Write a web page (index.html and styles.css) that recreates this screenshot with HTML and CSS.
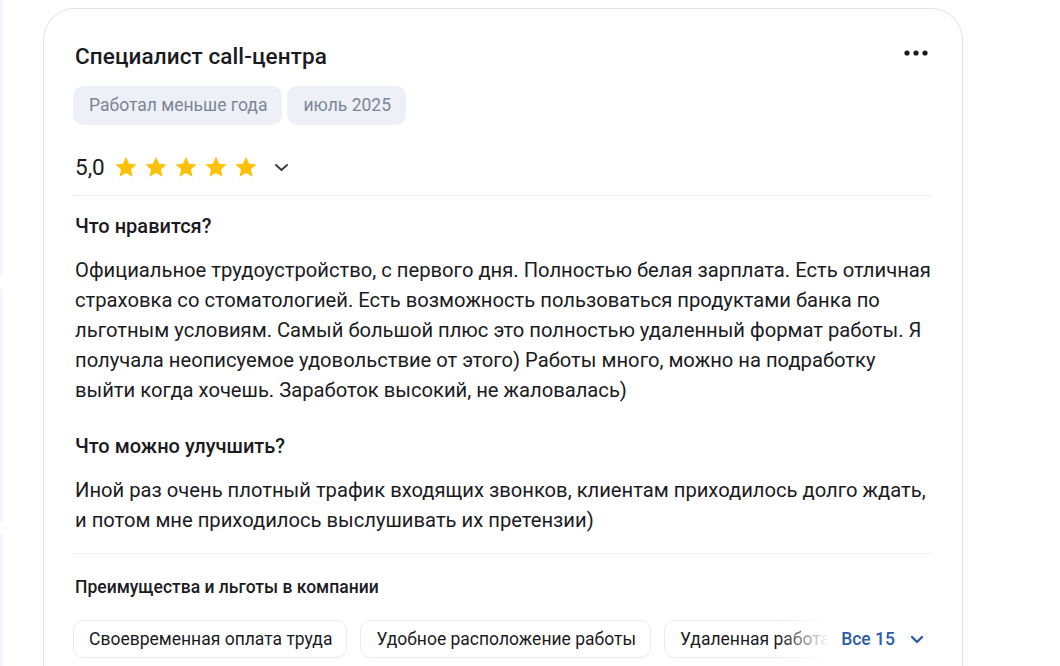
FILE: index.html
```html
<!DOCTYPE html>
<html lang="ru">
<head>
    <meta charset="UTF-8">
    <meta name="viewport" content="width=device-width, initial-scale=1.0">
    <title>Отзыв сотрудника</title>
    <link rel="stylesheet" href="styles.css">
</head>
<body>
    <div class="page">
        <div class="side-list">
            <div class="side-card side-card-1"></div>
            <div class="side-card side-card-2"></div>
            <div class="side-card side-card-3"></div>
        </div>

        <article class="review">
            <div class="review-head">
                <h1 class="review-title">Специалист call-центра</h1>
                <button class="more-btn" aria-label="Ещё">
                    <svg width="26" height="8" viewBox="0 0 26 8">
                        <circle cx="4" cy="4" r="2.6" fill="#1b1b1f"/>
                        <circle cx="13" cy="4" r="2.6" fill="#1b1b1f"/>
                        <circle cx="22" cy="4" r="2.6" fill="#1b1b1f"/>
                    </svg>
                </button>
            </div>

            <div class="tags">
                <span class="tag">Работал меньше года</span>
                <span class="tag">июль 2025</span>
            </div>

            <div class="rating">
                <span class="rating-value">5,0</span>
                <span class="stars">
                    <svg class="star" viewBox="0 0 24 24"><path d="M12 1.8l3.1 6.9 7.4.7-5.6 5 1.7 7.4L12 17.9l-6.6 3.9 1.7-7.4-5.6-5 7.4-.7z"/></svg>
                    <svg class="star" viewBox="0 0 24 24"><path d="M12 1.8l3.1 6.9 7.4.7-5.6 5 1.7 7.4L12 17.9l-6.6 3.9 1.7-7.4-5.6-5 7.4-.7z"/></svg>
                    <svg class="star" viewBox="0 0 24 24"><path d="M12 1.8l3.1 6.9 7.4.7-5.6 5 1.7 7.4L12 17.9l-6.6 3.9 1.7-7.4-5.6-5 7.4-.7z"/></svg>
                    <svg class="star" viewBox="0 0 24 24"><path d="M12 1.8l3.1 6.9 7.4.7-5.6 5 1.7 7.4L12 17.9l-6.6 3.9 1.7-7.4-5.6-5 7.4-.7z"/></svg>
                    <svg class="star" viewBox="0 0 24 24"><path d="M12 1.8l3.1 6.9 7.4.7-5.6 5 1.7 7.4L12 17.9l-6.6 3.9 1.7-7.4-5.6-5 7.4-.7z"/></svg>
                </span>
                <svg class="chevron" width="15" height="9" viewBox="0 0 15 9"><path d="M2 2l5.5 5 5.5-5" fill="none" stroke="#3c3c43" stroke-width="2" stroke-linecap="round" stroke-linejoin="round"/></svg>
            </div>

            <hr class="divider">

            <section class="block">
                <h3 class="block-title">Что нравится?</h3>
                <p class="block-text">Официальное трудоустройство, с первого дня. Полностью белая зарплата. Есть отличная страховка со стоматологией. Есть возможность пользоваться продуктами банка по льготным условиям. Самый большой плюс это полностью удаленный формат работы. Я получала неописуемое удовольствие от этого) Работы много, можно на подработку выйти когда хочешь. Заработок высокий, не жаловалась)</p>
            </section>

            <section class="block block-second">
                <h3 class="block-title">Что можно улучшить?</h3>
                <p class="block-text">Иной раз очень плотный трафик входящих звонков, клиентам приходилось долго ждать, и потом мне приходилось выслушивать их претензии)</p>
            </section>

            <hr class="divider divider-bottom">

            <h4 class="benefits-title">Преимущества и льготы в компании</h4>
            <div class="benefits">
                <div class="benefit-list">
                    <span class="benefit">Своевременная оплата труда</span>
                    <span class="benefit">Удобное расположение работы</span>
                    <span class="benefit">Удаленная работа</span>
                    <span class="benefit">ДМС</span>
                </div>
                <button class="show-all">
                    Все 15
                    <svg width="14" height="9" viewBox="0 0 14 9"><path d="M2 2l5 5 5-5" fill="none" stroke="#2d5ca8" stroke-width="2.4" stroke-linecap="round" stroke-linejoin="round"/></svg>
                </button>
            </div>
        </article>
    </div>
</body>
</html>
```

FILE: styles.css
```css
body { margin: 0; font-family: Roboto, "Noto Sans", Arial, sans-serif; color: #1b1b1f; background: #fff; overflow: hidden; }

.page { display: flex; align-items: flex-start; height: 666px; }

/* кусочки соседних карточек слева */
.side-list { width: 3px; display: flex; flex-direction: column; gap: 12px; flex-shrink: 0; margin-top: -20px; }
.side-card { background: #f4f5fb; border-radius: 0 10px 10px 0; }
.side-card-1 { height: 296px; }
.side-card-2 { height: 234px; }
.side-card-3 { height: 200px; }

.review {
    width: 860px;
    margin-left: 40px;
    margin-top: 8px;
    border: 1px solid #dfe3ea;
    border-bottom: none;
    border-radius: 32px 32px 0 0;
    padding: 33px 29px 0;
    height: 700px;
    box-sizing: content-box;
}

.review-head { display: flex; align-items: center; justify-content: space-between; }
.review-title { margin: 0; font-size: 22.5px; font-weight: 500; line-height: 28px; padding-left: 2px; letter-spacing: 0.1px; }
.more-btn { border: none; background: none; padding: 0; margin-right: 4px; margin-top: -6px; cursor: pointer; display: flex; }

.tags { display: flex; gap: 5px; margin-top: 16px; }
.tag { background: #edf0f7; color: #7b8598; font-size: 17.5px; line-height: 23px; padding: 8px 15px 8px 16px; border-radius: 10px; }

.rating { display: flex; align-items: center; height: 32px; margin-top: 26px; }
.rating-value { font-size: 22.5px; line-height: 28px; padding-left: 2px; margin-right: 9px; }
.stars { display: flex; gap: 6px; }
.star { width: 24px; height: 24px; fill: #ffc107; }
.chevron { margin-left: 16px; }

.divider { border: none; border-top: 1px solid #eff0f2; margin: 12px 0 0; }

.block { padding-left: 2px; margin-top: 18px; }
.block-second { margin-top: 29px; }
.block-title { margin: 0; font-size: 20px; font-weight: 500; line-height: 24px; }
.block-text { margin: 17px 0 0; font-size: 20.2px; line-height: 30px; }

.divider-bottom { margin-top: 18px; }

.benefits-title { margin: 22px 0 0; padding-left: 2px; font-size: 17.5px; font-weight: 500; line-height: 22px; }

.benefits { position: relative; margin-top: 22px; }
.benefit-list { display: flex; gap: 13px; overflow: hidden; white-space: nowrap; }
.benefit { border: 1px solid #e8ebf2; border-radius: 10px; padding: 7px 14px 7px 15px; font-size: 17.5px; line-height: 22px; color: #1b1b1f; }
.show-all {
    position: absolute;
    right: 0;
    top: 0;
    bottom: 0;
    display: flex;
    align-items: center;
    gap: 15px;
    padding: 0 9px 0 62px;
    border: none;
    background: linear-gradient(to right, rgba(255,255,255,0) 0, #fff 50px);
    color: #2d5ca8;
    font-family: inherit;
    font-size: 17.5px;
    font-weight: 500;
    cursor: pointer;
}
```
